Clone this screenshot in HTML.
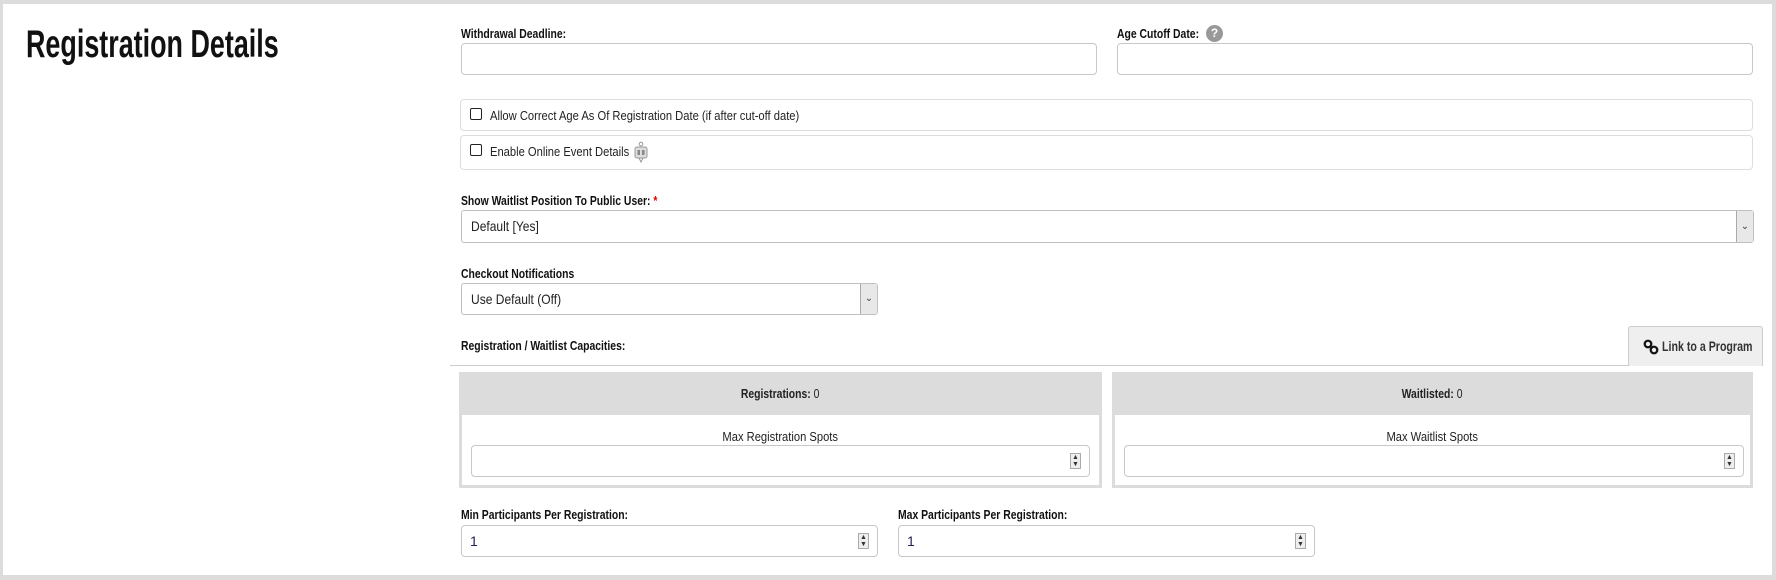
<!DOCTYPE html>
<html><head><meta charset="utf-8"><style>
*{box-sizing:border-box;margin:0;padding:0}
body{width:1776px;height:580px;background:#dcdcdc;position:relative;overflow:hidden;font-family:"Liberation Sans",sans-serif;color:#222}
.page{position:absolute;left:3px;top:4px;width:1769px;height:571px;background:#fff}
.a{position:absolute}
.n{display:inline-block;white-space:nowrap;transform-origin:left center}
.b8{transform:scaleX(0.8)}
.r8{transform:scaleX(0.86)}
.c{transform-origin:center center}
.t{position:absolute;left:23px;top:19px;font-size:39px;font-weight:bold;color:#111;white-space:nowrap;transform:scaleX(0.69);transform-origin:left}
.lbl{position:absolute;font-size:13px;font-weight:bold;color:#111;white-space:nowrap}
.in{position:absolute;border:1px solid #c8c8c8;border-radius:4px;background:#fff}
.cb{position:absolute;border:1px solid #ddd;border-radius:4px}
.box{position:absolute;width:12px;height:12px;border:1.5px solid #222;border-radius:2px}
.sp{position:absolute;right:8px;top:50%;margin-top:-8px;width:11px;height:16px;border:1px solid #aaa;background:#eee;font-size:7px;line-height:7px;text-align:center;color:#333}
.sel{position:absolute;border:1px solid #c0c0c0;border-radius:3px;font-size:14px;padding-left:9px;color:#222}
.arr{position:absolute;right:0;top:0;bottom:0;width:17px;background:#e8e8e8;border-left:1px solid #aaa;font-size:10px;text-align:center;color:#444}
.panel{position:absolute;border:3px solid #dcdcdc;border-top:none;background:#fff}
.ph{position:absolute;left:-3px;right:-3px;top:0;height:43px;background:#dcdcdc;text-align:center;line-height:43px;font-size:13px}
</style></head><body><div class="page">
<div class="t">Registration Details</div>
<div class="lbl" style="left:458px;top:22px"><span class="n b8">Withdrawal Deadline:</span></div>
<div class="in" style="left:458px;top:39px;width:636px;height:32px"></div>
<div class="lbl" style="left:1114px;top:22px"><span class="n b8">Age Cutoff Date:</span></div>
<div class="a" style="left:1203px;top:21px;width:17px;height:17px;border-radius:50%;background:#999;color:#fff;text-align:center;line-height:17px;font-size:12px;font-weight:bold">?</div>
<div class="in" style="left:1114px;top:39px;width:636px;height:32px"></div>
<div class="cb" style="left:457px;top:95px;width:1293px;height:32px"><div class="box" style="left:9px;top:8px"></div><div class="a" style="left:29px;top:8px;font-size:13px"><span class="n r8">Allow Correct Age As Of Registration Date (if after cut-off date)</span></div></div>
<div class="cb" style="left:457px;top:131px;width:1293px;height:35px"><div class="box" style="left:9px;top:8px"></div><div class="a" style="left:29px;top:8px;font-size:13px"><span class="n r8">Enable Online Event Details</span></div>
<svg class="a" style="left:173px;top:5px" width="14" height="22" viewBox="0 0 14 22"><circle cx="7" cy="3" r="1.8" fill="none" stroke="#999"/><rect x="1" y="6" width="12" height="11" rx="2" fill="#ddd" stroke="#999"/><rect x="3.5" y="9" width="2.5" height="5" fill="#888"/><rect x="8" y="9" width="2.5" height="5" fill="#888"/><path d="M5 17 L7 21 L9 17" fill="none" stroke="#999"/></svg></div>
<div class="lbl" style="left:458px;top:189px"><span class="n b8">Show Waitlist Position To Public User: <span style="color:#d00">*</span></span></div>
<div class="sel" style="left:458px;top:206px;width:1293px;height:33px;line-height:31px"><span class="n r8">Default [Yes]</span><div class="arr" style="line-height:31px">&#8964;</div></div>
<div class="lbl" style="left:458px;top:262px"><span class="n b8">Checkout Notifications</span></div>
<div class="sel" style="left:458px;top:279px;width:417px;height:32px;line-height:30px"><span class="n r8">Use Default (Off)</span><div class="arr" style="line-height:30px">&#8964;</div></div>
<div class="lbl" style="left:458px;top:334px"><span class="n b8">Registration / Waitlist Capacities:</span></div>
<div class="a" style="left:447px;top:361px;width:1313px;height:1px;background:#ccc"></div>
<div class="a" style="left:1625px;top:322px;width:135px;height:40px;background:#efefef;border:1px solid #ccc;border-bottom:none;border-radius:3px 3px 0 0;font-size:14px;font-weight:bold;line-height:38px;color:#333;white-space:nowrap"><svg class="a" style="left:14px;top:12px" width="16" height="16" viewBox="0 0 16 16"><circle cx="5" cy="5" r="3.3" fill="none" stroke="#111" stroke-width="2.2"/><circle cx="11" cy="11" r="3.3" fill="none" stroke="#111" stroke-width="2.2"/></svg><span class="n" style="position:absolute;left:33px;transform:scaleX(0.76)">Link to a Program</span></div>
<div class="panel" style="left:456px;top:368px;width:643px;height:116px"><div class="ph"><span class="n b8 c"><b>Registrations:</b> 0</span></div><div class="a" style="left:0;right:0;top:57px;text-align:center;font-size:13px"><span class="n r8 c">Max Registration Spots</span></div><div class="in" style="left:9px;top:73px;width:619px;height:32px"><div class="sp">▲<br>▼</div></div></div>
<div class="panel" style="left:1109px;top:368px;width:641px;height:116px"><div class="ph"><span class="n b8 c"><b>Waitlisted:</b> 0</span></div><div class="a" style="left:0;right:0;top:57px;text-align:center;font-size:13px"><span class="n r8 c">Max Waitlist Spots</span></div><div class="in" style="left:9px;top:73px;width:620px;height:32px"><div class="sp">▲<br>▼</div></div></div>
<div class="lbl" style="left:458px;top:503px"><span class="n b8">Min Participants Per Registration:</span></div>
<div class="in" style="left:458px;top:521px;width:417px;height:32px;font-size:14px;line-height:30px;padding-left:8px;color:#225">1<div class="sp">▲<br>▼</div></div>
<div class="lbl" style="left:895px;top:503px"><span class="n b8">Max Participants Per Registration:</span></div>
<div class="in" style="left:895px;top:521px;width:417px;height:32px;font-size:14px;line-height:30px;padding-left:8px;color:#225">1<div class="sp">▲<br>▼</div></div>
</div></body></html>
